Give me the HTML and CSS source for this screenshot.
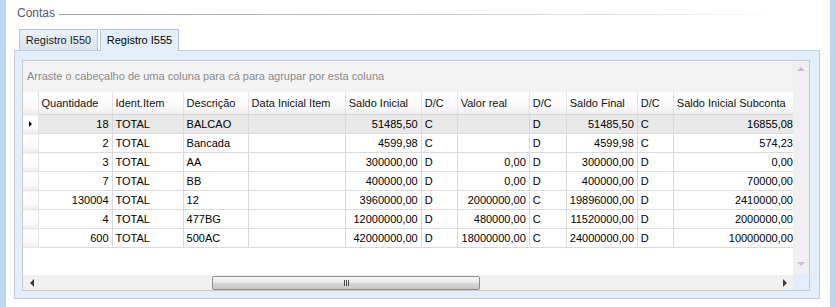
FILE: index.html
```html
<!DOCTYPE html>
<html>
<head>
    <link rel="stylesheet" href="styles.css">
</head>
<body>
    <div class="frame">
        <div class="edge"></div>
        <div class="content">
            <div class="group-title">
                <span>Contas</span>
                <div class="title-line"></div>
            </div>
            <div class="tabs">
                <div class="tab">Registro I550</div>
                <div class="tab active">Registro I555</div>
            </div>
            <div class="tab-panel">
                <div class="grid">
                    <div class="grid-main">
                        <div class="group-box">Arraste o cabeçalho de uma coluna para cá para agrupar por esta coluna</div>
                        <table class="data">
                            <colgroup>
                                <col style="width:15px">
                                <col style="width:74px">
                                <col style="width:71px">
                                <col style="width:65px">
                                <col style="width:97px">
                                <col style="width:76px">
                                <col style="width:36px">
                                <col style="width:72px">
                                <col style="width:37px">
                                <col style="width:71px">
                                <col style="width:36px">
                                <col style="width:120px">
                            </colgroup>
                            <thead>
                                <tr>
                                    <th class="ind"></th>
                                    <th>Quantidade</th>
                                    <th>Ident.Item</th>
                                    <th>Descrição</th>
                                    <th>Data Inicial Item</th>
                                    <th>Saldo Inicial</th>
                                    <th>D/C</th>
                                    <th>Valor real</th>
                                    <th>D/C</th>
                                    <th>Saldo Final</th>
                                    <th>D/C</th>
                                    <th>Saldo Inicial Subconta</th>
                                </tr>
                            </thead>
                            <tbody>
                                <tr class="current">
                                    <td class="ind"><span class="arrow"></span></td>
                                    <td class="num">18</td><td>TOTAL</td><td>BALCAO</td><td></td>
                                    <td class="num">51485,50</td><td>C</td><td class="num"></td><td>D</td>
                                    <td class="num">51485,50</td><td>C</td><td class="num last">16855,08</td>
                                </tr>
                                <tr>
                                    <td class="ind"></td>
                                    <td class="num">2</td><td>TOTAL</td><td>Bancada</td><td></td>
                                    <td class="num">4599,98</td><td>C</td><td class="num"></td><td>D</td>
                                    <td class="num">4599,98</td><td>C</td><td class="num last">574,23</td>
                                </tr>
                                <tr>
                                    <td class="ind"></td>
                                    <td class="num">3</td><td>TOTAL</td><td>AA</td><td></td>
                                    <td class="num">300000,00</td><td>D</td><td class="num">0,00</td><td>D</td>
                                    <td class="num">300000,00</td><td>D</td><td class="num last">0,00</td>
                                </tr>
                                <tr>
                                    <td class="ind"></td>
                                    <td class="num">7</td><td>TOTAL</td><td>BB</td><td></td>
                                    <td class="num">400000,00</td><td>D</td><td class="num">0,00</td><td>D</td>
                                    <td class="num">400000,00</td><td>D</td><td class="num last">70000,00</td>
                                </tr>
                                <tr>
                                    <td class="ind"></td>
                                    <td class="num">130004</td><td>TOTAL</td><td>12</td><td></td>
                                    <td class="num">3960000,00</td><td>D</td><td class="num">2000000,00</td><td>C</td>
                                    <td class="num">19896000,00</td><td>D</td><td class="num last">2410000,00</td>
                                </tr>
                                <tr>
                                    <td class="ind"></td>
                                    <td class="num">4</td><td>TOTAL</td><td>477BG</td><td></td>
                                    <td class="num">12000000,00</td><td>D</td><td class="num">480000,00</td><td>C</td>
                                    <td class="num">11520000,00</td><td>D</td><td class="num last">2000000,00</td>
                                </tr>
                                <tr>
                                    <td class="ind"></td>
                                    <td class="num">600</td><td>TOTAL</td><td>500AC</td><td></td>
                                    <td class="num">42000000,00</td><td>D</td><td class="num">18000000,00</td><td>C</td>
                                    <td class="num">24000000,00</td><td>D</td><td class="num last">10000000,00</td>
                                </tr>
                            </tbody>
                        </table>
                    </div>
                    <div class="vscroll">
                        <span class="tri up"></span>
                        <span class="tri down"></span>
                    </div>
                    <div class="hscroll">
                        <span class="tri left"></span>
                        <div class="hscroll-track">
                            <div class="thumb"><span class="grip"></span></div>
                        </div>
                        <span class="tri right"></span>
                    </div>
                    <div class="corner"></div>
                </div>
            </div>
        </div>
        <div class="edge"></div>
    </div>
</body>
</html>
```

FILE: styles.css
```css
:root {
    --edge: #bdd5ee;
    --panel: #e3eefb;
    --panel-border: #c3ccd6;
    --grid-border: #c9c9c9;
    --line: #dadada;
    --scroll: #f0f0f0;
    --text: #000000;
}

html, body {
    margin: 0;
    height: 100%;
}

body {
    font-family: 'Liberation Sans', Arial, sans-serif;
    font-size: 11px;
    color: var(--text);
    background: #ffffff;
}

.frame {
    display: flex;
    height: 307px;
}

.edge {
    width: 6px;
    background: var(--edge);
}

.content {
    flex: 1;
    padding: 0 10px 0 8px;
    display: flex;
    flex-direction: column;
}

.group-title {
    display: flex;
    align-items: center;
    height: 16px;
    margin-top: 5px;
    padding-left: 3px;
    font-size: 12px;
    color: #4c5b6e;
}

.title-line {
    flex: 1;
    height: 1px;
    margin: 2px 34px 0 4px;
    background: linear-gradient(to right, #9aa0a7, #e0e0e0 75%, rgba(255, 255, 255, 0));
}

.tabs {
    display: flex;
    gap: 2px;
    margin-top: 8px;
    padding-left: 5px;
    height: 22px;
    align-items: flex-end;
    position: relative;
    z-index: 1;
}

.tab {
    width: 79px;
    height: 21px;
    box-sizing: border-box;
    border: 1px solid #b5c3d3;
    border-bottom: none;
    background: linear-gradient(#eaf1fa, #d9e4f2);
    line-height: 20px;
    text-align: center;
    color: #1a1a1a;
    margin-bottom: 1px;
}

.tab.active {
    height: 22px;
    margin-bottom: 0;
    background: var(--panel);
    line-height: 21px;
    color: #000;
}

.tab-panel {
    margin-top: -1px;
    height: 249px;
    box-sizing: border-box;
    border: 1px solid var(--panel-border);
    background: var(--panel);
    padding: 9px 9px 8px 7px;
}

.grid {
    height: 231px;
    box-sizing: border-box;
    border: 1px solid var(--grid-border);
    background: #ffffff;
    display: grid;
    grid-template-columns: 1fr 16px;
    grid-template-rows: 1fr 16px;
    overflow: hidden;
}

.grid-main {
    overflow: hidden;
    min-width: 0;
}

.group-box {
    height: 31px;
    background: #f3f3f3;
    color: #8b8b8b;
    padding-left: 4px;
    line-height: 31px;
    white-space: nowrap;
}

.data {
    table-layout: fixed;
    border-collapse: collapse;
    width: 771px;
}

.data th,
.data td {
    white-space: nowrap;
    overflow: hidden;
    padding: 0 3px;
    text-align: left;
    font-weight: normal;
}

.data th {
    height: 22px;
    background: linear-gradient(#ffffff, #fbfbfb 60%, #eeeeee);
    border-right: 1px solid #e3e3e3;
    border-bottom: 1px solid #d6d6d6;
    color: #111;
}

.data td {
    height: 18px;
    border-right: 1px solid var(--line);
    border-bottom: 1px solid var(--line);
}

.data td.num {
    text-align: right;
    padding-right: 3px;
}

.data td.last {
    padding-right: 0;
}

.data .ind {
    padding: 0;
    background: linear-gradient(#ffffff, #fafafa 70%, #ececec);
    border-right: 1px solid #e2e2e2;
    border-bottom: 1px solid #e6e6e6;
}

.data tr.current td {
    background: #e8e8e8;
}

.data tr.current td.ind {
    background: linear-gradient(#ffffff, #fafafa 70%, #ececec);
}

.arrow {
    display: block;
    width: 0;
    height: 0;
    margin-left: 6px;
    border-top: 3px solid transparent;
    border-bottom: 3px solid transparent;
    border-left: 3px solid #000;
}

.vscroll {
    background: var(--scroll);
    display: flex;
    flex-direction: column;
    justify-content: space-between;
    align-items: center;
    padding: 6px 0 8px;
}

.hscroll {
    background: var(--scroll);
    display: flex;
    align-items: center;
    padding: 0 6px 0 7px;
    border-top: 1px solid #ffffff;
}

.hscroll-track {
    flex: 1;
    height: 100%;
    display: flex;
    align-items: center;
    padding-left: 178px;
    padding-right: 300px;
}

.thumb {
    width: 268px;
    height: 14px;
    box-sizing: border-box;
    border: 1px solid #8e8e8e;
    border-radius: 2px;
    background: linear-gradient(#f7f7f7, #e8e8e8 45%, #d3d3d3 55%, #c9c9c9);
    display: flex;
    justify-content: center;
    align-items: center;
}

.grip {
    width: 5px;
    height: 6px;
    background: repeating-linear-gradient(to right, #4f4f4f 0 1px, transparent 1px 2px);
}

.corner {
    background: #e3eefb;
}

.tri {
    width: 0;
    height: 0;
}

.tri.up {
    border-left: 4px solid transparent;
    border-right: 4px solid transparent;
    border-bottom: 4px solid #c2c2c2;
}

.tri.down {
    border-left: 4px solid transparent;
    border-right: 4px solid transparent;
    border-top: 4px solid #c2c2c2;
}

.tri.left {
    border-top: 4px solid transparent;
    border-bottom: 4px solid transparent;
    border-right: 4px solid #3c3c3c;
}

.tri.right {
    border-top: 4px solid transparent;
    border-bottom: 4px solid transparent;
    border-left: 4px solid #3c3c3c;
}
```
